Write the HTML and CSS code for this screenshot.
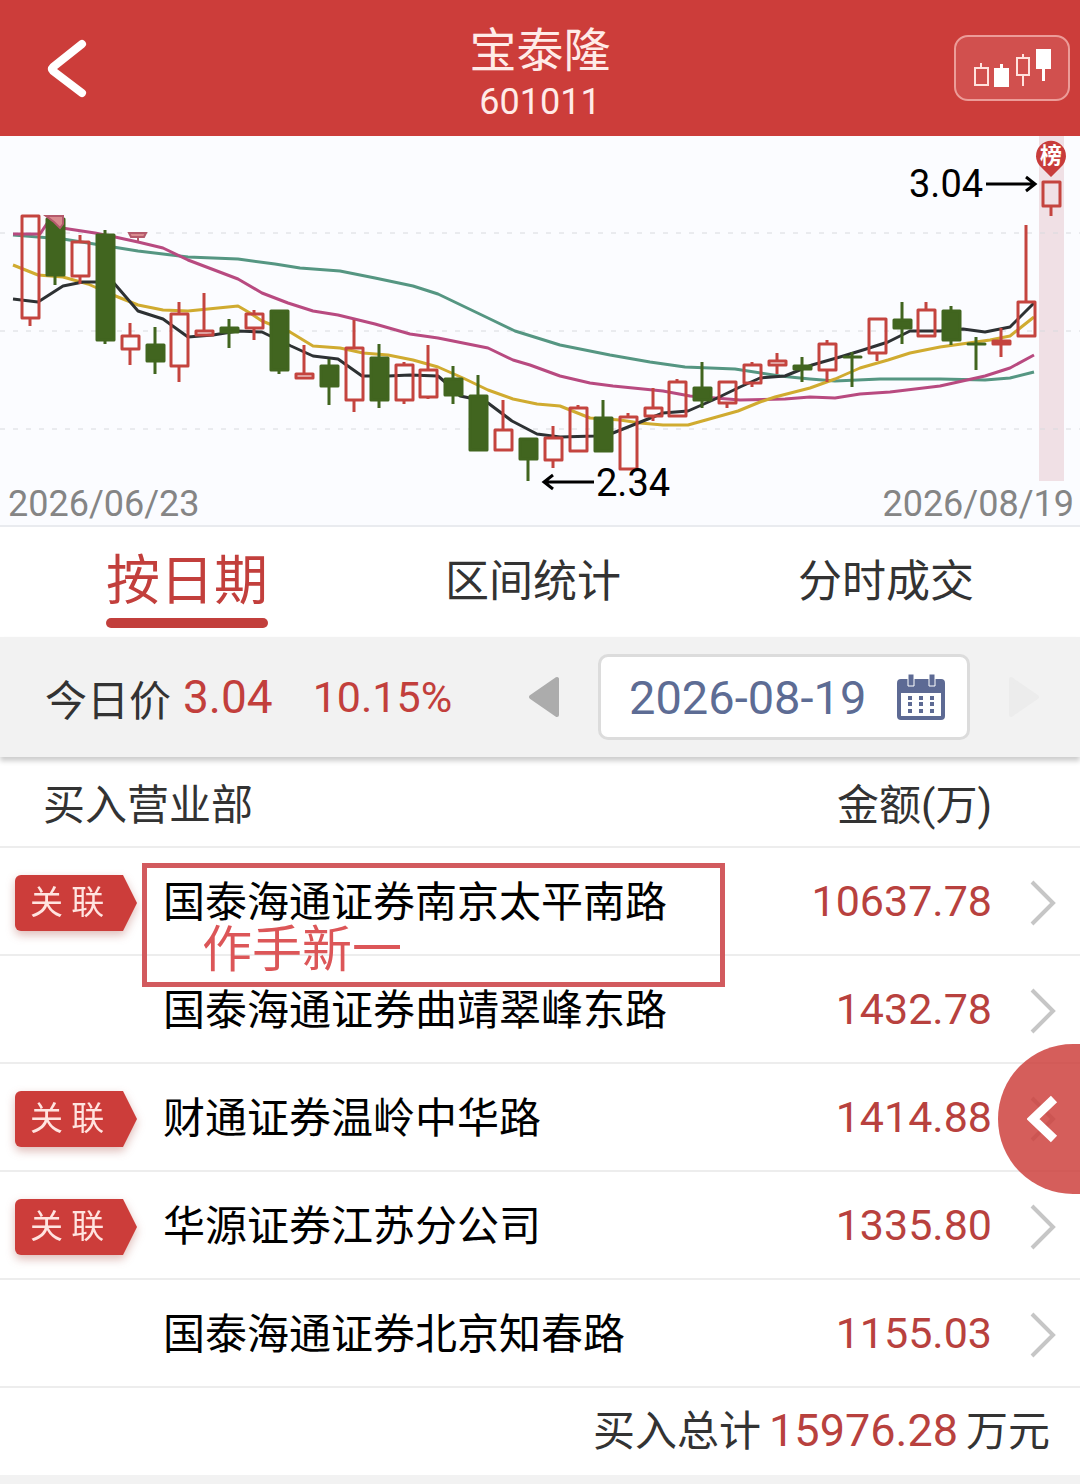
FILE: index.html
```html
<!DOCTYPE html>
<html lang="zh-CN">
<head>
    <meta charset="UTF-8">
    <meta name="viewport" content="width=device-width, initial-scale=1.0">
    <title>宝泰隆 601011</title>
    <link rel="stylesheet" href="styles.css">
</head>
<body>
    <header class="header">
        <button class="back-btn" aria-label="返回">
            <svg width="48" height="64" viewBox="0 0 48 64"><path d="M38 8L9 31Q7 33 9 35L38 57"/></svg>
        </button>
        <div class="header-title">
            <h1>宝泰隆</h1>
            <p>601011</p>
        </div>
        <button class="kline-btn" aria-label="K线">
            <svg width="80" height="44" viewBox="0 0 80 44">
                <path class="hollow" d="M3 22h13v17H3zM9 22v-5M45 12h12v17H45zM51 12v-4M51 29v11"/>
                <path class="solid" d="M22 22h15v19H22zM28 18h3v5h-3zM64 3h15v20H64zM70 22h3v13h-3z"/>
            </svg>
        </button>
    </header>

    <section class="chart">
        <svg class="chart-svg" viewBox="0 136 1080 348" role="img" aria-label="日K线图">
            <rect class="band" x="1039" y="136" width="25" height="345"/>
            <path class="grid" d="M0 233H1080M0 331H1080M0 429H1080"/>
            <polyline class="ma ma-teal" points="13,235 63,239 88,243 138,251 163,254 188,257 238,259 275,264 300,268 340,271 375,278 413,286 438,294 488,318 515,331 560,345 610,355 650,362 685,367 735,369 780,376 810,379 835,381 880,379 940,379 985,380 1010,378 1034,372"/>
            <polyline class="ma ma-pink" points="13,234 40,234 50,219 62,228 95,233 115,237 138,242 163,248 188,260 238,279 262,293 288,303 313,311 338,315 375,324 410,334 438,338 488,348 513,360 530,365 560,376 590,383 613,386 663,391 690,396 740,400 785,399 810,397 835,398 860,394 890,392 940,386 985,376 1010,368 1034,355"/>
            <polyline class="ma ma-yellow" points="13,265 38,275 63,277 88,284 113,295 138,305 163,310 188,311 238,306 250,313 262,321 290,332 313,346 340,348 363,353 388,355 413,360 438,367 463,378 488,390 513,399 537,404 560,406 590,418 620,420 640,423 663,425 688,425 713,418 738,411 760,402 775,397 810,388 835,379 860,368 888,360 910,353 940,347 990,340 1010,336 1034,317"/>
            <polyline class="ma ma-black" points="13,299 38,302 63,286 83,282 113,282 138,311 163,319 188,337 213,335 238,331 262,332 291,346 313,356 338,359 362,376 388,376 410,375 438,376 445,382 460,396 470,398 488,403 512,421 537,434 560,437 595,436 613,433 663,413 688,411 713,400 740,387 760,378 785,376 812,365 840,357 863,350 888,342 910,331 940,331 963,329 985,332 1010,327 1034,303"/>
            <g id="candles"></g>
            <path class="mark" d="M46 216H63V224L60 228L54 222ZM129 233H146L144 237H131ZM138 237V241"/>
            <path class="arrow" d="M986 184H1034M1026 177L1035 184L1026 191M594 482H546M553 475L544 482L553 489"/>
            <text class="price-label" x="909" y="197">3.04</text>
            <text class="price-label" x="596" y="496">2.34</text>
            <path class="pin" d="M1051 177L1041 167A15 15 0 1 1 1061 167Z"/>
            <text class="pin-label" x="1051" y="163">榜</text>
        </svg>
        <div class="chart-dates">
            <span>2026/06/23</span>
            <span>2026/08/19</span>
        </div>
    </section>

    <nav class="tabs">
        <button class="tab active">按日期</button>
        <button class="tab">区间统计</button>
        <button class="tab">分时成交</button>
    </nav>

    <section class="price-bar">
        <span>今日价</span>
        <span class="price-value">3.04</span>
        <span class="price-change">10.15%</span>
        <div class="date-picker">
            <button class="day-btn" aria-label="前一天">
                <svg width="32" height="42" viewBox="0 0 32 42"><path d="M29 3V39L3 21Z"/></svg>
            </button>
            <button class="date-btn">
                <span>2026-08-19</span>
                <svg width="48" height="46" viewBox="0 0 48 46">
                    <path fill-rule="evenodd" d="M4 5H44Q48 5 48 9V42Q48 46 44 46H4Q0 46 0 42V9Q0 5 4 5ZM4 19V42H44V19Z"/>
                    <path class="ring" d="M11 0h6v12h-6zM32 0h6v12h-6z"/>
                    <path d="M11 22h4v4h-4zM22 22h4v4h-4zM33 22h4v4h-4zM11 28h4v4h-4zM22 28h4v4h-4zM33 28h4v4h-4zM11 35h4v4h-4zM22 35h4v4h-4zM33 35h4v4h-4z"/>
                </svg>
            </button>
            <button class="day-btn" aria-label="后一天" disabled>
                <svg width="32" height="42" viewBox="0 0 32 42"><path d="M3 3V39L29 21Z"/></svg>
            </button>
        </div>
    </section>

    <main class="list">
        <table class="broker-table">
            <thead>
                <tr>
                    <th class="head-name" colspan="2">买入营业部</th>
                    <th class="amount">金额(万)</th>
                    <td></td>
                </tr>
            </thead>
            <tbody>
                <tr>
                    <td class="tag-cell"><span class="tag">关 联</span></td>
                    <td>国泰海通证券南京太平南路</td>
                    <td class="amount num">10637.78</td>
                    <td class="more"><a href="#" aria-label="详情"><svg width="26" height="46" viewBox="0 0 26 46"><path d="M2 2L23 23L2 44"/></svg></a></td>
                </tr>
                <tr>
                    <td class="tag-cell"></td>
                    <td>国泰海通证券曲靖翠峰东路</td>
                    <td class="amount num">1432.78</td>
                    <td class="more"><a href="#" aria-label="详情"><svg width="26" height="46" viewBox="0 0 26 46"><path d="M2 2L23 23L2 44"/></svg></a></td>
                </tr>
                <tr>
                    <td class="tag-cell"><span class="tag">关 联</span></td>
                    <td>财通证券温岭中华路</td>
                    <td class="amount num">1414.88</td>
                    <td class="more"><a href="#" aria-label="详情"><svg width="26" height="46" viewBox="0 0 26 46"><path d="M2 2L23 23L2 44"/></svg></a></td>
                </tr>
                <tr>
                    <td class="tag-cell"><span class="tag">关 联</span></td>
                    <td>华源证券江苏分公司</td>
                    <td class="amount num">1335.80</td>
                    <td class="more"><a href="#" aria-label="详情"><svg width="26" height="46" viewBox="0 0 26 46"><path d="M2 2L23 23L2 44"/></svg></a></td>
                </tr>
                <tr>
                    <td class="tag-cell"></td>
                    <td>国泰海通证券北京知春路</td>
                    <td class="amount num">1155.03</td>
                    <td class="more"><a href="#" aria-label="详情"><svg width="26" height="46" viewBox="0 0 26 46"><path d="M2 2L23 23L2 44"/></svg></a></td>
                </tr>
            </tbody>
        </table>
        <p class="total">买入总计<strong>15976.28</strong>万元</p>

        <div class="note">作手新一</div>
        <button class="side-btn" aria-label="展开">
            <svg width="32" height="48" viewBox="0 0 32 48"><path d="M27 4L6 24L27 44"/></svg>
        </button>
    </main>

    <script src="chart.js"></script>
</body>
</html>
```

FILE: styles.css
```css
* {
    margin: 0;
    padding: 0;
    box-sizing: border-box;
}

body {
    font-family: Roboto, 'Noto Sans CJK SC', sans-serif;
    font-size: 42px;
    color: #333;
    background: #f2f2f2;
    min-height: 100vh;
}

button {
    font: inherit;
    color: inherit;
    background: none;
    border: none;
    cursor: pointer;
}

svg {
    display: block;
}

/* Header */
.header {
    display: grid;
    grid-template-columns: 140px 1fr 140px;
    align-items: center;
    height: 136px;
    background: #cc3d3a;
    color: #ffebe8;
}

.back-btn {
    justify-self: start;
    padding-left: 44px;
}

.back-btn path {
    fill: none;
    stroke: #fff;
    stroke-width: 8;
    stroke-linecap: round;
}

.header-title {
    padding-top: 14px;
    text-align: center;
}

.header-title h1 {
    font-size: 47px;
    font-weight: 400;
    line-height: 54px;
}

.header-title p {
    font-size: 36px;
    line-height: 48px;
}

.kline-btn {
    justify-self: end;
    display: flex;
    align-items: center;
    justify-content: center;
    width: 116px;
    height: 66px;
    margin-right: 10px;
    border: 2px solid #ec9c98;
    border-radius: 14px;
    background: rgba(255, 255, 255, 0.1);
}

.kline-btn .hollow {
    fill: none;
    stroke: #ffe2de;
    stroke-width: 2;
}

.kline-btn .solid {
    fill: #fff;
}

/* Chart */
.chart {
    background: #fbfcff;
    border-bottom: 2px solid #e9ebef;
}

.chart-svg {
    width: 100%;
    overflow: visible;
}

.band {
    fill: #f0e0e5;
}

.grid {
    fill: none;
    stroke: #d8dade;
    stroke-width: 1;
    stroke-dasharray: 5 8;
}

.ma {
    fill: none;
    stroke-width: 3;
    stroke-linejoin: round;
}

.ma-black {
    stroke: #2d3133;
}

.ma-yellow {
    stroke: #d0ab30;
}

.ma-pink {
    stroke: #b84a80;
}

.ma-teal {
    stroke: #559682;
}

.up {
    fill: none;
    stroke: #c4443f;
    stroke-width: 3;
    stroke-linejoin: round;
}

.down {
    fill: #41651f;
    stroke: #41651f;
    stroke-width: 3;
    stroke-linejoin: round;
}

.mark {
    fill: #d98b8f;
    stroke: #b45a6c;
    stroke-width: 2;
}

.arrow {
    fill: none;
    stroke: #000;
    stroke-width: 3;
}

.price-label {
    font-size: 38px;
    fill: #000;
}

.pin {
    fill: #c83c3b;
}

.pin-label {
    font-size: 22px;
    font-weight: 700;
    text-anchor: middle;
    fill: #fff;
}

.chart-dates {
    display: flex;
    justify-content: space-between;
    padding: 0 6px 0 8px;
    font-size: 36px;
    line-height: 41px;
    color: #858585;
}

/* Tabs */
.tabs {
    display: flex;
    justify-content: space-between;
    height: 110px;
    padding: 0 106px;
    background: #fff;
}

.tab {
    font-size: 44px;
    line-height: 108px;
}

.tab.active {
    position: relative;
    font-size: 54px;
    color: #c23f3c;
}

.tab.active::after {
    content: '';
    position: absolute;
    left: 0;
    right: 0;
    bottom: 9px;
    height: 10px;
    border-radius: 5px;
    background: #c23f3c;
}

/* Price and date */
.price-bar {
    position: relative;
    z-index: 1;
    display: flex;
    align-items: center;
    height: 120px;
    padding: 0 40px 0 45px;
    background: #f2f2f2;
    box-shadow: 0 4px 5px rgba(0, 0, 0, 0.2);
}

.price-value {
    margin-left: 12px;
    font-size: 46px;
    color: #c23f3c;
}

.price-change {
    margin-left: 40px;
    font-size: 43px;
    color: #c23f3c;
}

.date-picker {
    display: flex;
    align-items: center;
    gap: 38px;
    margin-left: auto;
}

.day-btn path {
    fill: #acacac;
    stroke: #acacac;
    stroke-width: 4;
    stroke-linejoin: round;
}

.day-btn:disabled path {
    fill: #ececec;
    stroke: #ececec;
}

.date-btn {
    display: flex;
    align-items: center;
    justify-content: space-between;
    width: 372px;
    height: 86px;
    padding: 0 22px 0 28px;
    border: 3px solid #dcdcdc;
    border-radius: 10px;
    background: #fff;
    font-size: 47px;
    color: #5d6c94;
}

.date-btn svg {
    fill: #5d6a94;
}

.date-btn .ring {
    stroke: #fff;
    stroke-width: 1;
}

/* Broker list */
.list {
    position: relative;
    padding-top: 5px;
    background: #fff;
    overflow: hidden;
}

.broker-table {
    width: 100%;
    border-collapse: collapse;
    line-height: 42px;
}

.broker-table tr {
    height: 108px;
    border-bottom: 2px solid #ededed;
}

.broker-table thead tr {
    height: 85px;
}

.broker-table th,
.broker-table td {
    padding-top: 4px;
}

.broker-table th {
    font-weight: 400;
    text-align: left;
}

.broker-table .head-name {
    padding-left: 43px;
}

.broker-table tbody {
    color: #000;
}

.broker-table .tag-cell {
    width: 163px;
    padding-left: 15px;
}

.tag {
    position: relative;
    display: block;
    width: 108px;
    padding-left: 15px;
    border-radius: 6px 0 0 6px;
    background: #cc3d3a;
    color: #ffe4e0;
    font-size: 33px;
    line-height: 56px;
    white-space: nowrap;
    filter: drop-shadow(0 4px 5px rgba(160, 60, 50, 0.35));
}

.tag::after {
    content: '';
    position: absolute;
    left: 100%;
    top: 0;
    width: 14px;
    height: 100%;
    background: #cc3d3a;
    clip-path: polygon(0 0, 100% 50%, 0 100%);
}

.broker-table .amount {
    text-align: right;
}

.broker-table .num {
    padding-top: 0;
    font-size: 43px;
    color: #b8413e;
}

.broker-table .more {
    width: 88px;
    padding-left: 38px;
}

.more path {
    fill: none;
    stroke: #c6c6c6;
    stroke-width: 4;
}

.total {
    padding-right: 30px;
    text-align: right;
    line-height: 86px;
}

.total strong {
    margin: 0 8px;
    font-size: 45px;
    font-weight: 400;
    color: #b8413e;
}

/* Marks the first broker */
.note {
    position: absolute;
    top: 106px;
    left: 142px;
    width: 583px;
    height: 124px;
    padding: 57px 0 0 55px;
    border: 5px solid #d25a5e;
    font-size: 50px;
    line-height: 50px;
    color: #dc5658;
}

.side-btn {
    position: absolute;
    top: 287px;
    right: 0;
    width: 82px;
    height: 150px;
    padding-left: 29px;
    border-radius: 75px 0 0 75px;
    background: rgba(204, 61, 58, 0.83);
}

.side-btn path {
    fill: none;
    stroke: #fff;
    stroke-width: 9;
}
```

FILE: chart.js
```js
// [type, high, body top, body bottom, low]
const candles = [
    ['up', 216, 216, 318, 326], ['down', 217, 219, 275, 285], ['up', 235, 242, 276, 284],
    ['down', 230, 235, 340, 344], ['up', 323, 336, 349, 365], ['down', 327, 345, 361, 374],
    ['up', 302, 314, 366, 382], ['up', 293, 331, 335, 335], ['down', 319, 328, 332, 348],
    ['up', 310, 314, 328, 340], ['down', 311, 311, 370, 374], ['up', 345, 374, 378, 378],
    ['down', 359, 366, 386, 405], ['up', 320, 348, 400, 412], ['down', 344, 358, 400, 408],
    ['up', 362, 365, 400, 404], ['up', 345, 370, 397, 399], ['down', 366, 379, 395, 404],
    ['down', 375, 396, 450, 450], ['up', 400, 430, 450, 450], ['down', 439, 439, 459, 481],
    ['up', 426, 438, 460, 468], ['up', 405, 408, 451, 451], ['down', 400, 418, 451, 451],
    ['up', 413, 417, 469, 469], ['up', 388, 408, 416, 421], ['up', 379, 382, 416, 416],
    ['down', 362, 388, 400, 408], ['up', 382, 382, 403, 408], ['up', 362, 365, 383, 387],
    ['up', 353, 361, 365, 374], ['down', 357, 366, 369, 382], ['up', 340, 344, 370, 382],
    ['down', 352, 357, 357, 387], ['up', 319, 319, 353, 361], ['down', 302, 320, 328, 344],
    ['up', 302, 310, 336, 336], ['down', 306, 311, 340, 345], ['down', 337, 344, 344, 370],
    ['up', 328, 341, 344, 357], ['up', 225, 302, 336, 336], ['up', 182, 182, 206, 216]
];

const paths = candles.map(([type, high, top, bottom, low], i) => {
    const x = Math.round(30 + i * 24.9);
    return `<path class="${type}" d="M${x} ${high}V${top}M${x} ${bottom}V${low}M${x - 8} ${top}h17V${bottom}h-17Z"/>`;
});

document.getElementById('candles').innerHTML = paths.join('');
```
